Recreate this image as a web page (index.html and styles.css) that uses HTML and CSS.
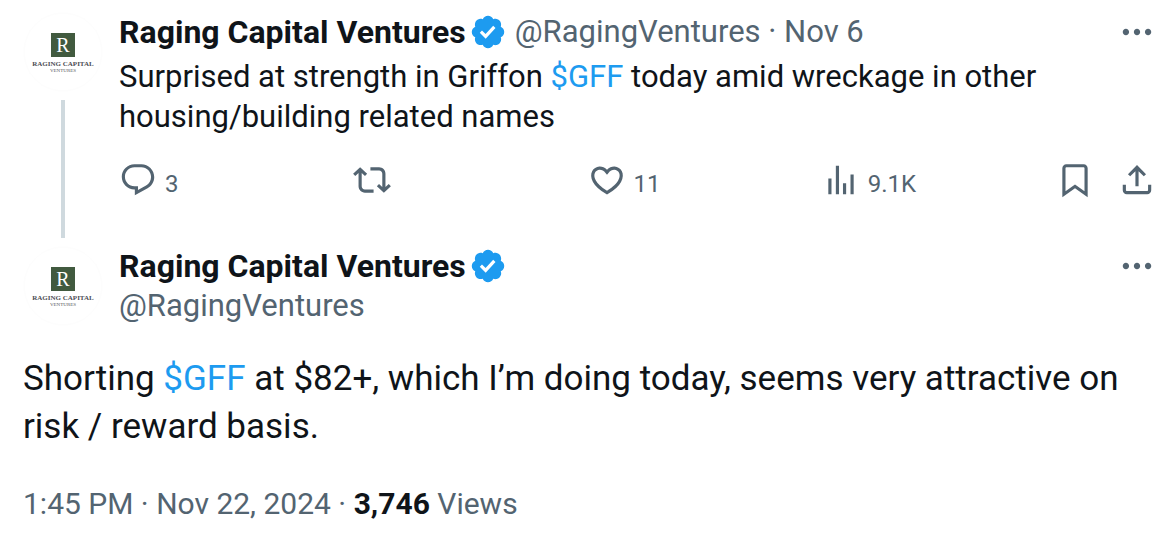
FILE: index.html
```html
<!DOCTYPE html>
<html lang="en">
<head>
<meta charset="utf-8">
<meta name="viewport" content="width=device-width, initial-scale=1">
<title>Raging Capital Ventures: Shorting $GFF</title>
<link rel="stylesheet" href="styles.css">
</head>
<body>
<svg class="defs" aria-hidden="true">
  <symbol id="verified" viewBox="0 0 22 22"><path d="M20.396 11c-.018-.646-.215-1.275-.57-1.816-.354-.54-.852-.972-1.438-1.246.223-.607.27-1.264.14-1.897-.131-.634-.437-1.218-.882-1.687-.47-.445-1.053-.75-1.687-.882-.633-.13-1.29-.083-1.897.14-.273-.587-.704-1.086-1.245-1.44S11.647 1.62 11 1.604c-.646.017-1.273.213-1.813.568s-.969.854-1.24 1.44c-.608-.223-1.267-.272-1.902-.14-.635.13-1.22.436-1.69.882-.445.47-.749 1.055-.878 1.688-.13.633-.08 1.29.144 1.896-.587.274-1.087.705-1.443 1.245-.356.54-.555 1.17-.574 1.817.02.647.218 1.276.574 1.817.356.54.856.972 1.443 1.245-.224.606-.274 1.263-.144 1.896.13.634.433 1.218.877 1.688.47.443 1.054.747 1.687.878.633.132 1.29.084 1.897-.136.274.586.705 1.084 1.246 1.439.54.354 1.17.551 1.816.569.647-.016 1.276-.213 1.817-.567s.972-.854 1.245-1.44c.604.239 1.266.296 1.903.164.636-.132 1.22-.447 1.68-.907.46-.46.776-1.044.908-1.681s.075-1.299-.165-1.903c.586-.274 1.084-.705 1.439-1.246.354-.54.551-1.17.569-1.816zM9.662 14.85l-3.429-3.428 1.293-1.302 2.072 2.072 4.4-4.794 1.347 1.246z"/></symbol>
  <symbol id="more" viewBox="0 0 24 24"><path d="M3 12c0-1.1.9-2 2-2s2 .9 2 2-.9 2-2 2-2-.9-2-2zm9 2c1.1 0 2-.9 2-2s-.9-2-2-2-2 .9-2 2 .9 2 2 2zm7 0c1.1 0 2-.9 2-2s-.9-2-2-2-2 .9-2 2 .9 2 2 2z"/></symbol>
  <symbol id="reply" viewBox="0 0 24 24"><path d="M1.751 10c0-4.42 3.584-8 8.005-8h4.366c4.49 0 8.129 3.64 8.129 8.13 0 2.96-1.607 5.68-4.196 7.11l-8.054 4.46v-3.69h-.067c-4.49.1-8.183-3.51-8.183-8.01zm8.005-6c-3.317 0-6.005 2.69-6.005 6 0 3.37 2.77 6.08 6.138 6.01l.351-.01h1.761v2.3l5.087-2.81c1.951-1.08 3.163-3.13 3.163-5.36 0-3.39-2.744-6.13-6.129-6.13H9.756z"/></symbol>
  <symbol id="repost" viewBox="0 0 24 24"><path d="M4.5 3.88l4.432 4.14-1.364 1.46L5.5 7.55V16c0 1.1.896 2 2 2H13v2H7.5c-2.209 0-4-1.79-4-4V7.55L1.432 9.48.068 8.02 4.5 3.88zM16.5 6H11V4h5.5c2.209 0 4 1.79 4 4v8.45l2.068-1.93 1.364 1.46-4.432 4.14-4.432-4.14 1.364-1.46 2.068 1.93V8c0-1.1-.896-2-2-2z"/></symbol>
  <symbol id="like" viewBox="0 0 24 24"><path d="M16.697 5.5c-1.222-.06-2.679.51-3.89 2.16l-.805 1.09-.806-1.09C9.984 6.01 8.526 5.44 7.304 5.5c-1.243.07-2.349.78-2.91 1.91-.552 1.12-.633 2.78.479 4.82 1.074 1.97 3.257 4.27 7.129 6.61 3.87-2.34 6.052-4.64 7.126-6.61 1.111-2.04 1.03-3.7.477-4.82-.561-1.13-1.666-1.84-2.908-1.91zm4.187 7.69c-1.351 2.48-4.001 5.12-8.379 7.67l-.503.3-.504-.3c-4.379-2.55-7.029-5.19-8.382-7.67-1.36-2.5-1.41-4.86-.514-6.67.887-1.79 2.647-2.91 4.601-3.01 1.651-.09 3.368.56 4.798 2.01 1.429-1.45 3.146-2.1 4.796-2.01 1.954.1 3.714 1.22 4.601 3.01.896 1.81.846 4.17-.514 6.67z"/></symbol>
  <symbol id="views" viewBox="0 0 24 24"><path d="M8.75 21V3h2v18h-2zM18 21V8.5h2V21h-2zM4 21l.004-10h2L6 21H4zm9.248 0v-7h2v7h-2z"/></symbol>
  <symbol id="bookmark" viewBox="0 0 24 24"><path d="M4 4.5C4 3.12 5.119 2 6.5 2h11C18.881 2 20 3.12 20 4.5v18.44l-8-5.71-8 5.71V4.5zM6.5 4c-.276 0-.5.22-.5.5v14.56l6-4.29 6 4.29V4.5c0-.28-.224-.5-.5-.5h-11z"/></symbol>
  <symbol id="share" viewBox="0 0 24 24"><path d="M12 2.59l5.7 5.7-1.41 1.42L13 6.41V16h-2V6.41l-3.3 3.3-1.41-1.42L12 2.59zM21 15l-.02 3.51c0 1.38-1.12 2.49-2.5 2.49H5.5C4.11 21 3 19.88 3 18.5V15h2v3.5c0 .28.22.5.5.5h12.98c.28 0 .5-.22.5-.5L19 15h2z"/></symbol>
</svg>

<main class="thread">
  <article class="post">
    <div class="rail">
      <svg class="avatar" viewBox="0 0 80 80">
        <circle class="logo-disc" cx="40" cy="40" r="39"/>
        <rect class="logo-box" x="28" y="21" width="24" height="24"/>
        <text class="logo-letter" x="40" y="40">R</text>
        <text class="logo-name" x="40" y="54">RAGING CAPITAL</text>
        <text class="logo-sub" x="40" y="60">VENTURES</text>
      </svg>
      <span class="thread-line"></span>
    </div>
    <div class="content">
      <header class="post-head">
        <a class="name" href="#profile">Raging Capital Ventures</a>
        <svg class="badge" role="img" aria-label="Verified account"><use href="#verified"/></svg>
        <span class="meta"><a href="#profile">@RagingVentures</a> · <a href="#post"><time datetime="2024-11-06">Nov 6</time></a></span>
        <button class="icon-button more" aria-label="More"><svg class="icon"><use href="#more"/></svg></button>
      </header>
      <p class="text">Surprised at strength in Griffon <a class="tag" href="#gff">$GFF</a> today amid wreckage in other housing/building related names</p>
      <div class="actions">
        <div class="action"><button class="icon-button" aria-label="Reply, 3"><svg class="icon"><use href="#reply"/></svg><span class="count">3</span></button></div>
        <div class="action"><button class="icon-button" aria-label="Repost"><svg class="icon"><use href="#repost"/></svg></button></div>
        <div class="action"><button class="icon-button" aria-label="Like, 11"><svg class="icon"><use href="#like"/></svg><span class="count">11</span></button></div>
        <div class="action"><button class="icon-button" aria-label="Views, 9.1K"><svg class="icon"><use href="#views"/></svg><span class="count">9.1K</span></button></div>
        <div class="action-end">
          <button class="icon-button" aria-label="Bookmark"><svg class="icon"><use href="#bookmark"/></svg></button>
          <button class="icon-button" aria-label="Share"><svg class="icon"><use href="#share"/></svg></button>
        </div>
      </div>
    </div>
  </article>

  <article class="focus">
    <header class="focus-head">
      <svg class="avatar" viewBox="0 0 80 80">
        <circle class="logo-disc" cx="40" cy="40" r="39"/>
        <rect class="logo-box" x="28" y="21" width="24" height="24"/>
        <text class="logo-letter" x="40" y="40">R</text>
        <text class="logo-name" x="40" y="54">RAGING CAPITAL</text>
        <text class="logo-sub" x="40" y="60">VENTURES</text>
      </svg>
      <div class="content">
        <div class="post-head">
          <a class="name" href="#profile">Raging Capital Ventures</a>
          <svg class="badge" role="img" aria-label="Verified account"><use href="#verified"/></svg>
          <button class="icon-button more" aria-label="More"><svg class="icon"><use href="#more"/></svg></button>
        </div>
        <a class="handle" href="#profile">@RagingVentures</a>
      </div>
    </header>
    <p class="focus-text">Shorting <a class="tag" href="#gff">$GFF</a> at $82+, which I’m doing today, seems very attractive on risk / reward basis.</p>
    <p class="stamp"><time datetime="2024-11-22T13:45">1:45 PM · Nov 22, 2024</time> · <strong>3,746</strong> Views</p>
  </article>
</main>
</body>
</html>
```
FILE: styles.css
```css
* {
  box-sizing: border-box;
}

body {
  margin: 0;
  background: #fff;
  color: #0f1419;
  font: 31px/40px Roboto, "Noto Sans", sans-serif;
}

p {
  margin: 0;
}

a {
  color: inherit;
  text-decoration: none;
}

.defs {
  display: block;
  width: 0;
  height: 0;
}

.thread {
  padding: 12px 16px 16px 23px;
}

.post {
  display: flex;
  gap: 16px;
}

.rail {
  display: flex;
  flex-direction: column;
  align-items: center;
  gap: 8px;
}

.avatar {
  flex: none;
  width: 80px;
  height: 80px;
}

.thread-line {
  flex: 1;
  width: 4px;
  background: #cfd9de;
}

.content {
  flex: 1;
  min-width: 0;
}

.post .content {
  padding-bottom: 39px;
}

.post-head {
  display: flex;
  align-items: center;
  height: 40px;
}

.name {
  font-size: 32px;
  font-weight: 700;
}

.badge {
  flex: none;
  width: 38px;
  height: 38px;
  margin-left: 3px;
  fill: #1d9bf0;
}

.meta {
  margin-left: 8px;
  color: #536471;
}

.icon-button {
  display: flex;
  align-items: center;
  gap: 8px;
  padding: 0;
  border: 0;
  background: none;
  color: #536471;
  font: inherit;
  cursor: pointer;
}

.count {
  padding-top: 8px;
  font-size: 24px;
  line-height: 30px;
}

.more {
  margin-left: auto;
}

.icon {
  display: block;
  flex: none;
  width: 38px;
  height: 38px;
  fill: #536471;
}

.text {
  margin-top: 5px;
}

.tag {
  color: #1d9bf0;
}

.actions {
  display: flex;
  align-items: center;
  margin-top: 24px;
}

.action {
  flex: 1;
}

.action-end {
  display: flex;
  gap: 24px;
}

.focus {
  margin-top: 8px;
}

.focus-head {
  display: flex;
  gap: 16px;
}

.handle {
  color: #536471;
}

.focus-text {
  margin-top: 29px;
  font-size: 35px;
  line-height: 48px;
}

.stamp {
  margin-top: 33px;
  color: #536471;
  font-size: 30px;
}

.stamp strong {
  color: #0f1419;
}

.logo-disc {
  fill: #fff;
  stroke: #fdfdfd;
}

.logo-box {
  fill: #415a3f;
}

.logo-letter,
.logo-name,
.logo-sub {
  font-family: "Liberation Serif", serif;
  text-anchor: middle;
}

.logo-letter {
  fill: #fff;
  font-size: 20px;
}

.logo-name {
  fill: #4c4d54;
  font-size: 7px;
  font-weight: 700;
}

.logo-sub {
  fill: #55565c;
  font-size: 5px;
}
```
